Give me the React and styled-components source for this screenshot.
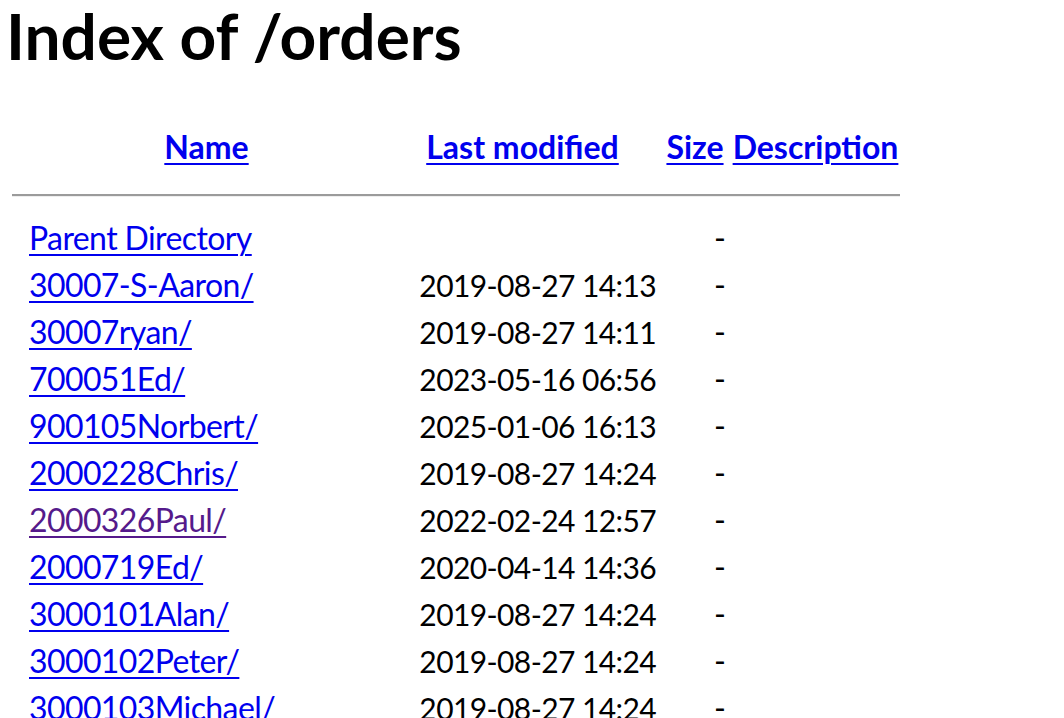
import React from "react";
import styled, { createGlobalStyle } from "styled-components";

const Global = createGlobalStyle`
  html, body { margin: 0; padding: 0; background: #fff; overflow: hidden; }
  body { font-family: "Lato", "Liberation Sans", sans-serif; color: #000; }
`;

const Page = styled.div`
  padding: 0 0 0 6px;
  height: 718px;
  overflow: hidden;
`;

const Title = styled.h1`
  margin: 0;
  font-weight: 700;
  font-size: 64px;
  line-height: 72px;
`;

const Listing = styled.table`
  margin: 51px 0 0 6px;
  width: 888px;
  table-layout: fixed;
  border-collapse: collapse;
  font-size: 32px;
`;

const Col = styled.col`
  width: ${(p) => p.$w}px;
`;

const HeadCell = styled.th`
  height: 47px;
  padding: 0;
  font-weight: 700;
  text-align: center;
  white-space: nowrap;
`;

const NameCell = styled.td`
  height: 47px;
  padding: 0 0 0 2px;
  text-align: left;
  white-space: nowrap;
  line-height: 47px;
  letter-spacing: -0.6px;
`;

const DateCell = styled.td`
  padding: 0 3px 0 0;
  text-align: right;
  white-space: nowrap;
  font-size: 30px;
  letter-spacing: -0.6px;
`;

const SizeCell = styled.td`
  padding: 0 5px 0 0;
  text-align: right;
`;

const EmptyCell = styled.td`
  padding: 0;
`;

const RuleCell = styled.th`
  height: 44px;
  padding: 0;
  vertical-align: middle;
`;

const Rule = styled.hr`
  margin: 6px 0 0;
  border: 0;
  border-top: 2px solid #9b9b9b;
  border-bottom: 1px solid #eeeeee;
  height: 0;
`;

const Link = styled.a`
  color: ${(p) => (p.$visited ? "#551a8b" : "#0000ee")};
  text-decoration: underline;
  text-decoration-thickness: 2px;
  text-underline-offset: 4px;
`;

const rows = [
  ["Parent Directory", ""],
  ["30007-S-Aaron/", "2019-08-27 14:13"],
  ["30007ryan/", "2019-08-27 14:11"],
  ["700051Ed/", "2023-05-16 06:56"],
  ["900105Norbert/", "2025-01-06 16:13"],
  ["2000228Chris/", "2019-08-27 14:24"],
  ["2000326Paul/", "2022-02-24 12:57", true],
  ["2000719Ed/", "2020-04-14 14:36"],
  ["3000101Alan/", "2019-08-27 14:24"],
  ["3000102Peter/", "2019-08-27 14:24"],
  ["3000103Michael/", "2019-08-27 14:24"],
];

export default function App() {
  return (
    <Page>
      <Global />
      <Title>Index of /orders</Title>
      <Listing>
        <colgroup>
          <Col $w={15} />
          <Col $w={359} />
          <Col $w={273} />
          <Col $w={72} />
          <Col $w={169} />
        </colgroup>
        <tbody>
          <tr>
            <HeadCell />
            <HeadCell><Link href="#">Name</Link></HeadCell>
            <HeadCell><Link href="#">Last modified</Link></HeadCell>
            <HeadCell><Link href="#">Size</Link></HeadCell>
            <HeadCell><Link href="#">Description</Link></HeadCell>
          </tr>
          <tr>
            <RuleCell colSpan={5}><Rule /></RuleCell>
          </tr>
          {rows.map(([name, date, visited]) => (
            <tr key={name}>
              <EmptyCell />
              <NameCell><Link href="#" $visited={visited}>{name}</Link></NameCell>
              <DateCell>{date}</DateCell>
              <SizeCell>-</SizeCell>
              <EmptyCell />
            </tr>
          ))}
        </tbody>
      </Listing>
    </Page>
  );
}
